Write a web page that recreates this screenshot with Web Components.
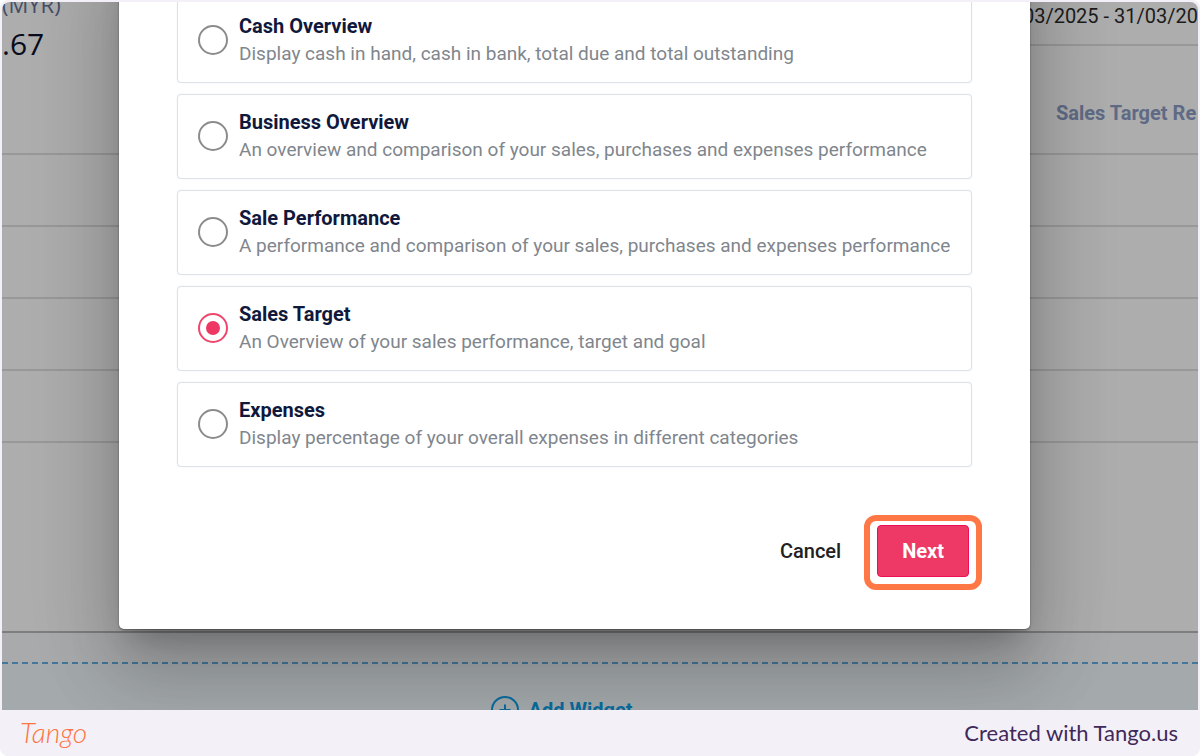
<!DOCTYPE html>
<html lang="en">
<head>
<meta charset="utf-8">
<meta name="viewport" content="width=device-width, initial-scale=1">
<title>Add Widget</title>
<style>
    body {
        margin: 0;
        background: #fff;
        font-family: Roboto, "Liberation Sans", sans-serif;
    }
</style>
</head>
<body>
<step-frame>
    <dashboard-page></dashboard-page>
    <widget-dialog>
        <widget-option heading="Cash Overview">Display cash in hand, cash in bank, total due and total outstanding</widget-option>
        <widget-option heading="Business Overview">An overview and comparison of your sales, purchases and expenses performance</widget-option>
        <widget-option heading="Sale Performance">A performance and comparison of your sales, purchases and expenses performance</widget-option>
        <widget-option heading="Sales Target" checked>An Overview of your sales performance, target and goal</widget-option>
        <widget-option heading="Expenses">Display percentage of your overall expenses in different categories</widget-option>
    </widget-dialog>
    <step-footer slot="footer"></step-footer>
</step-frame>

<script>
(function() {
    function createTemplate(html) {
        const template = document.createElement('template');
        template.innerHTML = html;
        return template;
    }

    const frameTemplate = createTemplate(`
<style>
    :host {
        display: flex;
        flex-direction: column;
        box-sizing: border-box;
        height: 100vh;
        padding: 2px 2px 0;
        border-radius: 8px;
        background: #f3f1f7;
    }

    #stage {
        position: relative;
        flex: 1;
        min-height: 0;
        overflow: hidden;
        border-radius: 8px 8px 0 0;
        background: #adadad;
    }
</style>
<main id="stage"><slot></slot></main>
<slot name="footer"></slot>`);

    class StepFrame extends HTMLElement {
        constructor() {
            super();
            this.attachShadow({ mode: 'open' });
            this.shadowRoot.appendChild(frameTemplate.content.cloneNode(true));
        }
    }

    const footerTemplate = createTemplate(`
<style>
    :host {
        display: flex;
        align-items: center;
        justify-content: space-between;
        box-sizing: border-box;
        height: 46px;
        padding: 0 20px 2px 18px;
        font-family: Lato, sans-serif;
    }

    a {
        color: #41285a;
        font-size: 22px;
        text-decoration: none;
    }

    #logo {
        color: #ff7442;
        font-size: 28px;
        font-style: italic;
        font-weight: 300;
    }
</style>
<a id="logo" href="#tango">Tango</a>
<a href="#created">Created with Tango.us</a>`);

    class StepFooter extends HTMLElement {
        constructor() {
            super();
            this.attachShadow({ mode: 'open' });
            this.shadowRoot.appendChild(footerTemplate.content.cloneNode(true));
        }
    }

    const dashboardTemplate = createTemplate(`
<style>
    :host {
        display: flex;
        flex-direction: column;
        height: 100%;
        background: #adadad;
    }

    #panels {
        display: grid;
        grid-template-columns: 117fr 911fr 168fr;
        border-bottom: 2px solid #7e7e7e;
    }

    .panel {
        grid-column: 1;
        min-width: 0;
        white-space: nowrap;
    }

    .panel.right {
        grid-column: 3;
    }

    .head {
        box-sizing: border-box;
        height: 153px;
        border-bottom: 2px solid #989898;
    }

    .row {
        box-sizing: border-box;
        height: 72px;
        border-bottom: 2px solid #989898;
    }

    .space {
        height: 188px;
    }

    .total {
        display: flex;
        flex-direction: column;
        font-family: "Open Sans", sans-serif;
    }

    .currency {
        margin-top: -12px;
        color: #454d66;
        font-size: 22px;
        line-height: 28px;
    }

    .amount {
        color: #080c1c;
        font-size: 30px;
        line-height: 52px;
    }

    .period {
        display: flex;
        justify-content: flex-end;
        box-sizing: border-box;
        height: 44px;
        border-bottom: 2px solid #989898;
        color: #1c1c1c;
        font-size: 20px;
        line-height: 28px;
    }

    .column {
        padding: 53px 0 0 26px;
        color: #5f6a85;
        font-size: 20px;
        font-weight: 700;
        line-height: 28px;
    }

    #add {
        display: flex;
        flex: 1;
        justify-content: center;
        margin-top: 29px;
        padding: 32px 77px 0 0;
        border-top: 2px dashed #44779b;
        background: #a4a9ac;
    }

    #add-bar {
        display: flex;
        flex: 1;
        flex-direction: column;
        background: #a9aaac;
    }

    button {
        display: flex;
        align-items: center;
        gap: 10px;
        height: 28px;
        padding: 0;
        border: 0;
        background: none;
        color: #0a6c9e;
        font: 700 20px/28px Roboto, sans-serif;
        cursor: pointer;
    }
</style>
<section id="panels">
    <div class="panel">
        <div class="head total">
            <span class="currency">(MYR)</span>
            <span class="amount">.67</span>
        </div>
        <div class="row"></div>
        <div class="row"></div>
        <div class="row"></div>
        <div class="row"></div>
        <div class="space"></div>
    </div>
    <div class="panel right">
        <div class="head">
            <div class="period">03/2025 - 31/03/20</div>
            <div class="column">Sales Target Re</div>
        </div>
        <div class="row"></div>
        <div class="row"></div>
        <div class="row"></div>
        <div class="row"></div>
    </div>
</section>
<section id="add-bar">
    <div id="add">
        <button type="button">
            <svg width="28" height="28" viewBox="0 0 28 28" fill="none" stroke="currentColor" stroke-width="2" aria-hidden="true">
                <circle cx="14" cy="14" r="13"/>
                <path d="M14 8.500v11M8.500 14h11"/>
            </svg>
            Add Widget
        </button>
    </div>
</section>`);

    class DashboardPage extends HTMLElement {
        constructor() {
            super();
            this.attachShadow({ mode: 'open' });
            this.shadowRoot.appendChild(dashboardTemplate.content.cloneNode(true));
        }
    }

    const optionTemplate = createTemplate(`
<style>
    :host {
        display: block;
    }

    label {
        display: flex;
        align-items: center;
        gap: 11px;
        padding: 14px 20px 15px;
        border: 1px solid #dde2e8;
        box-shadow: 0 0 1px #c8d0da;
        border-radius: 4px;
        cursor: pointer;
    }

    input {
        display: grid;
        flex: none;
        place-items: center;
        box-sizing: border-box;
        width: 30px;
        height: 30px;
        margin: 0;
        border: 2px solid #8c8c8c;
        border-radius: 50%;
        appearance: none;
        cursor: pointer;
    }

    input:checked {
        border-color: #f0466c;
    }

    input:checked::before {
        content: "";
        width: 14px;
        height: 14px;
        border-radius: 50%;
        background: #ee3863;
    }

    #text {
        display: flex;
        flex-direction: column;
        line-height: 27px;
    }

    #heading {
        color: #10183c;
        font-size: 20px;
        font-weight: 700;
    }

    #detail {
        color: #7f868d;
        font-size: 19px;
    }
</style>
<label>
    <input type="radio" name="widget">
    <span id="text">
        <span id="heading"></span>
        <span id="detail"><slot></slot></span>
    </span>
</label>`);

    class WidgetOption extends HTMLElement {
        constructor() {
            super();
            this.attachShadow({ mode: 'open' });
            this.shadowRoot.appendChild(optionTemplate.content.cloneNode(true));
            this.input = this.shadowRoot.querySelector('input');
            this._onChange = this._onChange.bind(this);
        }

        get checked() {
            return this.input.checked;
        }

        set checked(newValue) {
            this.input.checked = newValue;
        }

        connectedCallback() {
            this.shadowRoot.querySelector('#heading').textContent = this.getAttribute('heading');
            this.checked = this.hasAttribute('checked');
            this.input.addEventListener('change', this._onChange);
        }

        disconnectedCallback() {
            this.input.removeEventListener('change', this._onChange);
        }

        _onChange() {
            this.dispatchEvent(new CustomEvent('option-select', { bubbles: true, composed: true }));
        }
    }

    const dialogTemplate = createTemplate(`
<style>
    /* the dialog hangs from the bottom of the stage, its top runs out of view */
    :host {
        position: absolute;
        inset: 0;
        display: grid;
        grid-template-columns: 117fr 911fr 168fr;
        grid-template-rows: minmax(0, 1fr);
        align-items: end;
        padding-bottom: 81px;
    }

    #dialog {
        grid-column: 2;
        min-width: 0;
        padding-top: 58px;
        border-radius: 5px;
        background: #fff;
        box-shadow:
            0 20px 28px -12px rgba(0, 0, 0, .2),
            0 44px 72px 6px rgba(0, 0, 0, .14),
            0 16px 84px 14px rgba(0, 0, 0, .12),
            0 1px 2px rgba(0, 0, 0, .4);
    }

    #options {
        display: flex;
        flex-direction: column;
        gap: 11px;
        padding: 0 58px;
    }

    #actions {
        display: flex;
        align-items: baseline;
        justify-content: flex-end;
        gap: 23px;
        padding: 48px 48px 39px;
    }

    button {
        padding: 0;
        border: 0;
        background: none;
        color: #212121;
        font: 500 20px/28px Roboto, sans-serif;
        cursor: pointer;
    }

    #highlight {
        padding: 4px 7px 7px;
        border: 6px solid #ff7744;
        border-radius: 12px;
    }

    #next {
        display: block;
        padding: 11px 24px;
        border: 1px solid #ec0f53;
        border-radius: 4px;
        background: #ee3966;
        color: #fff;
        font-weight: 700;
    }
</style>
<section id="dialog" role="dialog" aria-label="Add Widget">
    <div id="options" role="radiogroup"><slot></slot></div>
    <div id="actions">
        <button type="button">Cancel</button>
        <div id="highlight"><button type="button" id="next">Next</button></div>
    </div>
</section>`);

    class WidgetDialog extends HTMLElement {
        constructor() {
            super();
            this.attachShadow({ mode: 'open' });
            this.shadowRoot.appendChild(dialogTemplate.content.cloneNode(true));
            this._onSelect = this._onSelect.bind(this);
        }

        connectedCallback() {
            this.addEventListener('option-select', this._onSelect);
        }

        disconnectedCallback() {
            this.removeEventListener('option-select', this._onSelect);
        }

        // each radio has its own shadow root, so the group is kept here
        _onSelect(event) {
            this.querySelectorAll('widget-option').forEach(option => {
                option.checked = option === event.target;
            });
        }
    }

    window.customElements.define('step-frame', StepFrame);
    window.customElements.define('step-footer', StepFooter);
    window.customElements.define('dashboard-page', DashboardPage);
    window.customElements.define('widget-option', WidgetOption);
    window.customElements.define('widget-dialog', WidgetDialog);
})();
</script>
</body>
</html>
